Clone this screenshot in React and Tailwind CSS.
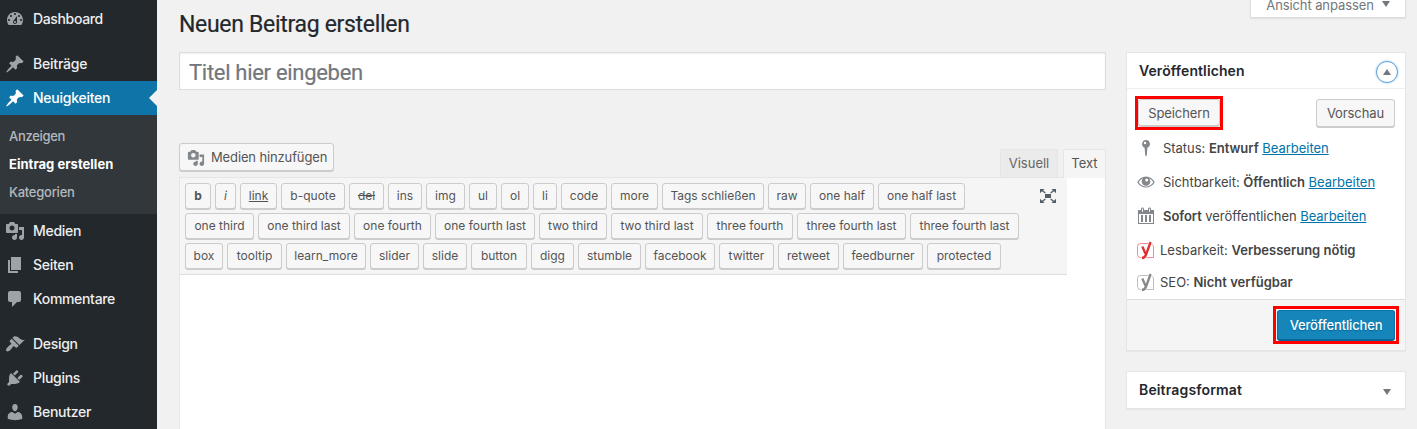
const PATHS = {
  dashboard:
    'M3.76 16h12.48c1.1-1.37 1.76-3.11 1.76-5 0-4.42-3.58-8-8-8s-8 3.58-8 8c0 1.89.66 3.63 1.76 5zM10 4c.55 0 1 .45 1 1s-.45 1-1 1-1-.45-1-1 .45-1 1-1zM6 6c.55 0 1 .45 1 1s-.45 1-1 1-1-.45-1-1 .45-1 1-1zm8 0c.55 0 1 .45 1 1s-.45 1-1 1-1-.45-1-1 .45-1 1-1zm-5.37 5.55L12 7v6c0 1.1-.9 2-2 2s-2-.9-2-2c0-.57.24-1.08.63-1.45zM4 10c.55 0 1 .45 1 1s-.45 1-1 1-1-.45-1-1 .45-1 1-1zm12 0c.55 0 1 .45 1 1s-.45 1-1 1-1-.45-1-1 .45-1 1-1zm-5 3c0-.55-.45-1-1-1s-1 .45-1 1 .45 1 1 1 1-.45 1-1z',
  post: 'M10.44 3.02l1.82-1.82 6.36 6.35-1.83 1.82c-1.05-.68-2.48-.57-3.41.36l-.75.75c-.92.93-1.04 2.35-.35 3.41l-1.83 1.82-2.41-2.41-2.8 2.79c-.42.42-3.38 2.71-3.8 2.29s1.86-3.39 2.28-3.81l2.79-2.79L4.1 9.36l1.83-1.82c1.05.69 2.48.57 3.4-.36l.75-.75c.93-.92 1.05-2.35.36-3.41z',
  media:
    'M13 11V4c0-.55-.45-1-1-1h-1.67L9 1H5L3.67 3H2c-.55 0-1 .45-1 1v7c0 .55.45 1 1 1h10c.55 0 1-.45 1-1zM7 4.5c1.38 0 2.5 1.12 2.5 2.5S8.38 9.5 7 9.5 4.5 8.38 4.5 7 5.62 4.5 7 4.5zM14 6h5v10.5c0 1.38-1.12 2.5-2.5 2.5S14 17.88 14 16.5s1.12-2.5 2.5-2.5c.17 0 .34.02.5.05V9h-3V6zm-4 8.05V13h2v3.5c0 1.38-1.12 2.5-2.5 2.5S7 17.88 7 16.5 8.12 14 9.5 14c.17 0 .34.02.5.05z',
  page: 'M6 15V2h10v13H6zm-1 1h8v2H3V5h2v11z',
  comments:
    'M5 2h9c1.1 0 2 .9 2 2v7c0 1.1-.9 2-2 2h-2l-5 5v-5H5c-1.1 0-2-.9-2-2V4c0-1.1.9-2 2-2z',
  appearance:
    'M14.48 11.06L7.41 3.99l1.5-1.5c.5-.56 2.3-.47 3.51.32 1.21.8 1.43 1.28 2.91 2.1 1.18.64 2.45 1.26 4.45.85zm-.71.71L6.7 4.7 4.93 6.47c-.39.39-.39 1.02 0 1.41l1.06 1.06c.39.39.39 1.03 0 1.42-.6.6-1.43 1.11-2.21 1.69-.35.26-.7.53-1.01.84C1.43 14.23.4 16.08 1.4 17.07c.99 1 2.84-.03 4.18-1.36.31-.31.58-.66.85-1.02.57-.78 1.08-1.61 1.69-2.21.39-.39 1.02-.39 1.41 0l1.06 1.06c.39.39 1.02.39 1.41 0z',
  plugins:
    'M13.11 4.36L9.87 7.6 8 5.73l3.24-3.24c.35-.34 1.05-.2 1.56.32.52.51.66 1.21.31 1.55zm-8 1.77l.91-1.12 9.01 9.01-1.19.84c-.71.71-2.63 1.16-3.82 1.16H6.14L4.9 17.26c-.59.59-1.54.59-2.12 0-.59-.58-.59-1.53 0-2.12l1.24-1.24v-3.88c0-1.13.4-3.19 1.09-3.89zm7.26 3.97l3.24-3.24c.34-.35 1.04-.21 1.55.31.52.51.66 1.21.31 1.55l-3.24 3.25z',
  users:
    'M10 9.25c-2.27 0-2.73-3.44-2.73-3.44C7 4.02 7.82 2 9.97 2c2.16 0 2.98 2.02 2.71 3.81 0 0-.41 3.44-2.68 3.44zm0 2.57L12.72 10c2.39 0 4.52 2.33 4.52 4.53v2.49s-3.65 1.13-7.24 1.13c-3.65 0-7.24-1.13-7.24-1.13v-2.49c0-2.25 1.94-4.48 4.47-4.48z',
  calendar:
    'M15 4h3v14H2V4h3V3c0-.83.67-1.5 1.5-1.5S8 2.17 8 3v1h4V3c0-.83.67-1.5 1.5-1.5S15 2.17 15 3v1zM6 3v2.5c0 .28.22.5.5.5s.5-.22.5-.5V3c0-.28-.22-.5-.5-.5S6 2.72 6 3zm7 0v2.5c0 .28.22.5.5.5s.5-.22.5-.5V3c0-.28-.22-.5-.5-.5s-.5.22-.5.5zm4 14V8H3v9h14zM7 16V9H5v7h2zm4 0V9H9v7h2zm4 0V9h-2v7h2z',
};

function Icon({ name, className }) {
  return (
    <svg viewBox="0 0 20 20" fill="currentColor" fillRule="nonzero" className={className}>
      <path d={PATHS[name]} />
    </svg>
  );
}

function MenuItem({ icon, label, spacing, active }) {
  return (
    <li
      className={
        'relative flex h-[34px] shrink-0 items-center pl-[5px] ' +
        (active ? 'bg-[#0f74a8] text-white' : 'text-[#eee]')
      }
    >
      <Icon name={icon} className={'size-5 shrink-0 ' + (active ? 'text-white' : 'text-[#9ea3a8]')} />
      <span className={'pl-2 text-[14px] leading-[18px] font-medium whitespace-nowrap ' + spacing}>{label}</span>
      {active && (
        <span className="absolute top-[9px] right-0 border-y-8 border-r-8 border-y-transparent border-r-[#f1f1f1]" />
      )}
    </li>
  );
}

function Sidebar() {
  return (
    <nav className="w-[157px] shrink-0 bg-[#23282d] pt-0.5">
      <ul className="flex flex-col">
        <MenuItem icon="dashboard" label="Dashboard" spacing="tracking-[-0.35px]" />
        <li className="h-[11px]" />
        <MenuItem icon="post" label="Beiträge" spacing="tracking-[-0.2px]" />
        <MenuItem icon="post" label="Neuigkeiten" spacing="tracking-[-0.25px]" active />
        <li className="h-[99px] bg-[#32373c] pt-[7px] pl-[9px]">
          <ul className="text-[13px] leading-7 font-medium whitespace-nowrap text-[#b4b9be]">
            <li className="tracking-[-0.3px]">Anzeigen</li>
            <li className="font-bold tracking-[0.03px] text-white">Eintrag erstellen</li>
            <li className="tracking-[-0.25px]">Kategorien</li>
          </ul>
        </li>
        <MenuItem icon="media" label="Medien" spacing="tracking-[-0.3px]" />
        <MenuItem icon="page" label="Seiten" spacing="tracking-[-0.3px]" />
        <MenuItem icon="comments" label="Kommentare" spacing="tracking-[-0.32px]" />
        <li className="h-[11px]" />
        <MenuItem icon="appearance" label="Design" spacing="tracking-[-0.3px]" />
        <MenuItem icon="plugins" label="Plugins" spacing="tracking-[-0.3px]" />
        <MenuItem icon="users" label="Benutzer" spacing="tracking-[-0.25px]" />
      </ul>
    </nav>
  );
}

const BUTTON = 'rounded-[3px] border border-[#ccc] bg-[#f7f7f7] text-[#555] shadow-[0_1px_0_#ccc] whitespace-nowrap ';

const TAG_ROWS = [
  [
    ['b', 'w-[26px] font-bold'],
    ['i', 'w-[21px] italic'],
    ['link', 'w-[37px] underline'],
    ['b-quote', 'w-[64px]'],
    ['del', 'w-[35px] line-through'],
    ['ins', 'w-[34px]'],
    ['img', 'w-[39px]'],
    ['ul', 'w-[28px]'],
    ['ol', 'w-[28px]'],
    ['li', 'w-[24px]'],
    ['code', 'w-[46px]'],
    ['more', 'w-[47px]'],
    ['Tags schließen', 'w-[102px]'],
    ['raw', 'w-[38px]'],
    ['one half', 'w-[64px]'],
    ['one half last', 'w-[87px]'],
  ],
  [
    ['one third', 'w-[69px]'],
    ['one third last', 'w-[92px]'],
    ['one fourth', 'w-[77px]'],
    ['one fourth last', 'w-[100px]'],
    ['two third', 'w-[68px]'],
    ['two third last', 'w-[92px]'],
    ['three fourth', 'w-[86px]'],
    ['three fourth last', 'w-[109px]'],
    ['three fourth last', 'w-[109px]'],
  ],
  [
    ['box', 'w-[38px]'],
    ['tooltip', 'w-[55px]'],
    ['learn_more', 'w-[80px]'],
    ['slider', 'w-[49px]'],
    ['slide', 'w-[44px]'],
    ['button', 'w-[56px]'],
    ['digg', 'w-[43px]'],
    ['stumble', 'w-[63px]'],
    ['facebook', 'w-[70px]'],
    ['twitter', 'w-[55px]'],
    ['retweet', 'w-[61px]'],
    ['feedburner', 'w-[80px]'],
    ['protected', 'w-[74px]'],
  ],
];

function FullscreenIcon() {
  return (
    <svg viewBox="0 0 16 14" className="mt-1 h-3.5 w-4 text-[#555d66]" fill="currentColor">
      <rect x="5" y="5" width="6" height="4" />
      <path d="M0 0h4.500L3.200 1.200 5.800 3.800 5 4.600 2 2.300 0 4.200zM16 0h-4.500l1.300 1.200L10.200 3.800l.8.8 3-2.300L16 4.200zM0 14h4.500l-1.300-1.200 2.600-2.600-.8-.8-3 2.300L0 9.800zM16 14h-4.500l1.300-1.200-2.600-2.600.8-.8 3 2.300L16 9.800z" />
    </svg>
  );
}

function Editor() {
  return (
    <section className="flex min-h-0 flex-1 flex-col pt-[53px]">
      <div className="flex h-[34px] items-start justify-between">
        <button className={BUTTON + 'flex h-7 w-[155px] items-center pl-[7px] text-[13px] tracking-[-0.13px]'}>
          <Icon name="media" className="mt-px mr-1.5 size-[18px] text-[#82878c]" />
          <span className="pt-px">Medien hinzufügen</span>
        </button>
        <div className="mt-[6px] flex gap-[5px] text-[13px] text-[#555]">
          <div className="flex h-7 w-[58px] items-center justify-center border border-b-0 border-[#e5e5e5] bg-[#ebebeb] text-[#666]">
            Visuell
          </div>
          <div className="relative z-10 -mb-px flex h-[29px] w-[43px] items-center justify-center border border-b-0 border-[#e5e5e5] bg-[#f5f5f5]">
            Text
          </div>
        </div>
      </div>
      <div className="flex-1 border border-b-0 border-[#e5e5e5] bg-white">
        <div className="flex h-[97px] w-[887px] justify-between border-b border-[#ddd] bg-[#f5f5f5] pt-[5px] pr-[11px] pl-[5px]">
          <div className="flex flex-col gap-1">
            {TAG_ROWS.map((row, r) => (
              <div key={r} className="flex gap-1">
                {row.map(([label, style], i) => (
                  <button
                    key={i}
                    className={BUTTON + 'flex h-[26px] items-center justify-center text-[12px] tracking-[0px] ' + style}
                  >
                    {label}
                  </button>
                ))}
              </div>
            ))}
          </div>
          <div className="pt-[2px]">
            <FullscreenIcon />
          </div>
        </div>
      </div>
    </section>
  );
}

function PinIcon() {
  return (
    <svg viewBox="0 0 20 20" className="size-5 text-[#82878c]" fill="currentColor">
      <path
        fillRule="evenodd"
        d="M10 2a4 4 0 0 1 1.4 7.7L10.8 17l-.8 1.5-.8-1.5-.6-7.3A4 4 0 0 1 10 2zM9 3.8a1.2 1.2 0 1 0 0 2.4 1.2 1.2 0 0 0 0-2.4z"
      />
    </svg>
  );
}

function EyeIcon() {
  return (
    <svg viewBox="0 0 20 20" className="size-5 text-[#82878c]" fill="currentColor">
      <path
        fillRule="evenodd"
        d="M10 4.6c3.6 0 6.8 2.2 8.8 5.6-2 3.2-5.2 5.3-8.8 5.3s-6.800-2.100-8.800-5.300C3.200 6.800 6.400 4.600 10 4.600zM2.600 10.200c1.700 2.600 4.400 4.200 7.400 4.200s5.700-1.600 7.400-4.200c-1.100-1.800-2.700-3.200-4.600-3.900a4.300 4.300 0 1 1-5.600 0c-1.900.7-3.500 2.100-4.600 3.900zM10.700 6.500a1.500 1.500 0 1 0 0 3 1.500 1.500 0 0 0 0-3z"
      />
    </svg>
  );
}

function YoastIcon({ className }) {
  return (
    <svg viewBox="0 0 18 19" className={'h-[19px] w-[18px] ' + className} fill="none" stroke="currentColor">
      <path
        d="M11.500 2.500H3.500A3 3 0 0 0 .5 5.500v8a3 3 0 0 0 3 3h1M9.500 16.500h7V6a3 3 0 0 0-1.500-2.800"
        strokeWidth="1"
        opacity=".55"
      />
      <path d="M5.300 5.500l3.200 7.200M13.600 1L9.300 13c-.8 2.300-1.900 3.900-4.300 4" strokeWidth="2.300" />
    </svg>
  );
}

function EditLink() {
  return <a className="text-[#0073aa] underline">Bearbeiten</a>;
}

function StatusRow({ icon, children, className }) {
  return (
    <div className={'flex items-center whitespace-nowrap ' + className}>
      {icon}
      <p className="pt-[2px]">{children}</p>
    </div>
  );
}

function PublishBox() {
  return (
    <section className="h-[299px] border border-[#e5e5e5] bg-white text-[13px] text-[#444] shadow-[0_1px_1px_rgba(0,0,0,0.04)]">
      <header className="flex h-9 items-center justify-between border-b border-[#eee] pr-[7px] pl-3">
        <h2 className="text-[14px] font-semibold tracking-[0.1px] text-[#23282d]">Veröffentlichen</h2>
        <span className="mt-[3px] flex size-[22px] items-center justify-center rounded-full border border-[#5b9dd9] shadow-[0_0_2px_rgba(30,140,190,0.6)]">
          <span className="border-x-4 border-b-[6px] border-x-transparent border-b-[#72777c]" />
        </span>
      </header>
      <div className="flex h-[210px] flex-col">
        <div className="flex items-start justify-between pt-[7px] pr-[10px] pl-2">
          <div className="flex h-[34px] w-[88px] border-[3px] border-[#f00]">
            <button className={BUTTON + 'h-[27px] w-[82px] pt-[2px] tracking-[-0.1px]'}>Speichern</button>
          </div>
          <button className={BUTTON + 'mt-[3px] h-7 w-[79px] pt-[2px] tracking-[-0.1px]'}>Vorschau</button>
        </div>
        <div className="flex flex-col pt-[1px] pl-[9px]">
          <StatusRow className="h-[34px] gap-[7px] tracking-[-0.03px]" icon={<PinIcon />}>
            Status: <b className="font-semibold">Entwurf</b> <EditLink />
          </StatusRow>
          <StatusRow className="h-[34px] gap-[7px] tracking-[-0.02px]" icon={<EyeIcon />}>
            Sichtbarkeit: <b className="font-semibold">Öffentlich</b> <EditLink />
          </StatusRow>
          <StatusRow
            className="h-[34px] gap-[7px] tracking-[-0.05px]"
            icon={<Icon name="calendar" className="size-5 text-[#82878c]" />}
          >
            <b className="font-semibold">Sofort</b> veröffentlichen <EditLink />
          </StatusRow>
          <StatusRow className="h-[34px] gap-[5px] pl-[1px]" icon={<YoastIcon className="text-[#dc3232]" />}>
            Lesbarkeit: <b className="font-semibold">Verbesserung nötig</b>
          </StatusRow>
          <StatusRow className="h-[30px] gap-[5px] pl-[1px]" icon={<YoastIcon className="text-[#888]" />}>
            SEO: <b className="font-semibold">Nicht verfügbar</b>
          </StatusRow>
        </div>
      </div>
      <footer className="flex h-[51px] justify-end border-t border-[#ddd] bg-[#f5f5f5] pt-[6px] pr-[6px]">
        <div className="flex h-[38px] w-[126px] items-start justify-center border-[3px] border-[#f00] bg-[#f5f5f5] pt-px">
          <button className="h-[30px] w-[118px] rounded-[3px] border border-[#0073aa] border-b-[#006799] bg-[#1585ba] pt-[2px] font-medium tracking-[-0.15px] text-white shadow-[0_1px_0_#006799] text-shadow-[0_1px_1px_#006799]">
            Veröffentlichen
          </button>
        </div>
      </footer>
    </section>
  );
}

export default function App() {
  return (
    <div className="flex h-[429px] w-[1417px] overflow-hidden bg-[#f1f1f1] font-['Inter','Liberation_Sans',sans-serif]">
      <Sidebar />
      <main className="ml-[22px] flex w-[927px] shrink-0 flex-col">
        <h1 className="h-[52px] pt-[10px] font-['Roboto',sans-serif] text-[23px] leading-[29px] tracking-[-0.31px] text-[#23282d] [-webkit-text-stroke:0.2px_#23282d]">
          Neuen Beitrag erstellen
        </h1>
        <div className="flex h-[38px] shrink-0 items-center border border-[#ddd] bg-white pl-[9px] font-['Roboto',sans-serif] text-[22px] tracking-[-0.3px] text-[#72777c] shadow-[inset_0_1px_2px_rgba(0,0,0,0.07)] [-webkit-text-stroke:0.2px_#72777c]">
          <span className="pt-[3px]">Titel hier eingeben</span>
        </div>
        <Editor />
      </main>
      <aside className="ml-5 flex w-[280px] shrink-0 flex-col">
        <div className="flex h-[52px] items-start justify-end">
          <div className="flex h-[18px] w-[156px] items-end justify-center gap-2 border border-t-0 border-[#ddd] bg-white pb-[4px] text-[13px] leading-[16px] tracking-[-0.1px] text-[#72777c] shadow-[0_1px_1px_rgba(0,0,0,0.06)]">
            <span>Ansicht anpassen</span>
            <span className="mb-[6px] border-x-4 border-t-[6px] border-x-transparent border-t-[#72777c]" />
          </div>
        </div>
        <PublishBox />
        <section className="mt-5 flex h-[38px] items-center justify-between border border-[#e5e5e5] bg-white pr-[14px] pl-3 shadow-[0_1px_1px_rgba(0,0,0,0.04)]">
          <h2 className="pb-[2px] text-[14px] font-semibold tracking-[0.15px] text-[#23282d]">Beitragsformat</h2>
          <span className="mt-1 border-x-4 border-t-[6px] border-x-transparent border-t-[#72777c]" />
        </section>
      </aside>
    </div>
  );
}
